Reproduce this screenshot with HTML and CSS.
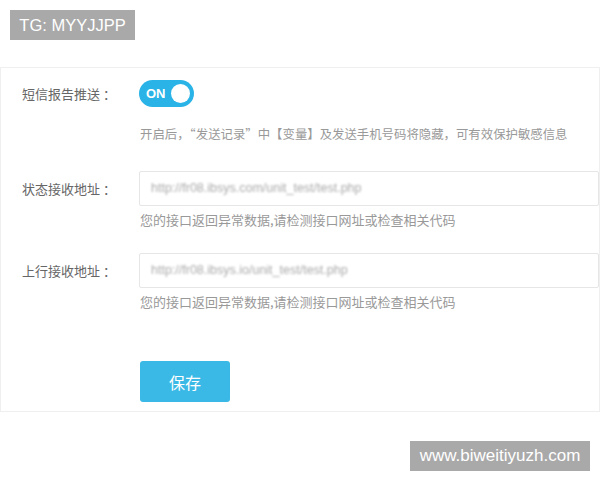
FILE: index.html
```html
<!DOCTYPE html>
<html lang="zh-CN">
<head>
<meta charset="utf-8">
<title>短信设置</title>
<link rel="stylesheet" href="styles.css">
</head>
<body>
<div class="badge">TG: MYYJJPP</div>
<section class="panel">
  <div class="row">
    <div class="label label-toggle">短信报告推送<span class="colon">：</span></div>
    <div class="field">
      <div class="toggle"><span class="toggle-text">ON</span><span class="knob"></span></div>
      <p class="desc">开启后，“发送记录”中【变量】及发送手机号码将隐藏，可有效保护敏感信息</p>
    </div>
  </div>
  <div class="row row-input">
    <div class="label label-input">状态接收地址<span class="colon">：</span></div>
    <div class="field">
      <div class="input"><span class="blur">http://fr08.ibsys.com/unit_test/test.php</span></div>
      <p class="help">您的接口返回异常数据,请检测接口网址或检查相关代码</p>
    </div>
  </div>
  <div class="row row-input2">
    <div class="label label-input">上行接收地址<span class="colon">：</span></div>
    <div class="field">
      <div class="input"><span class="blur">http://fr08.ibsys.io/unit_test/test.php</span></div>
      <p class="help">您的接口返回异常数据,请检测接口网址或检查相关代码</p>
    </div>
  </div>
  <div class="row row-btn">
    <div class="label"></div>
    <div class="field">
      <button class="save">保存</button>
    </div>
  </div>
</section>
<div class="footer">
  <div class="watermark">www.biweitiyuzh.com</div>
</div>
</body>
</html>
```
FILE: styles.css
```css
* { box-sizing: border-box; }
html, body { margin: 0; padding: 0; background: #fff; }
body {
  width: 600px;
  height: 480px;
  overflow: hidden;
  font-family: "Noto Sans CJK SC", "Noto Sans", sans-serif;
  color: #555;
}
.badge {
  margin: 10px 0 0 10px;
  width: 125px;
  height: 30px;
  background: #a9a9a9;
  color: #fff;
  font-family: "Liberation Sans", Arial, sans-serif;
  font-size: 16.5px;
  line-height: 30px;
  text-align: center;
}
.panel {
  margin-top: 27px;
  width: 600px;
  height: 345px;
  border: 1px solid #efefef;
  padding: 12px 0 0 0;
}
.row {
  display: grid;
  grid-template-columns: 138px 1fr;
}
.label {
  padding-left: 21px;
  font-size: 13px;
  color: #666;
}
.colon { margin-left: 3px; }
.label-toggle { line-height: 27px; }
.label-input { line-height: 35px; }
.toggle {
  position: relative;
  width: 55px;
  height: 27px;
  border-radius: 14px;
  background: #29b3e6;
}
.toggle-text {
  position: absolute;
  left: 7px;
  top: 0;
  line-height: 27px;
  font-family: "Liberation Sans", Arial, sans-serif;
  font-weight: bold;
  font-size: 13px;
  color: #fff;
}
.knob {
  position: absolute;
  right: 4px;
  top: 4px;
  width: 19px;
  height: 19px;
  border-radius: 50%;
  background: #fff;
}
.desc {
  margin: 18px 0 0 1px;
  font-size: 12.4px;
  line-height: 18px;
  color: #999;
}
.row-input { margin-top: 28px; }
.row-input2 { margin-top: 24px; }
.input {
  width: 460px;
  height: 35px;
  border: 1px solid #e6e6e6;
  border-radius: 2px;
  padding-left: 11px;
  line-height: 33px;
  font-family: "Liberation Sans", Arial, sans-serif;
  font-size: 12.5px;
}
.blur {
  color: #aaa;
  filter: blur(1.1px);
  display: inline-block;
}
.help {
  margin: 5px 0 0 1px;
  font-size: 13px;
  line-height: 18px;
  color: #999;
}
.row-btn { margin-top: 50px; }
.save {
  width: 90px;
  height: 41px;
  margin-left: 1px;
  border: none;
  border-radius: 3px;
  background: #3bb9e6;
  color: #fff;
  font-family: "Noto Sans CJK SC", sans-serif;
  font-size: 16px;
  padding: 0;
}
.footer {
  display: flex;
  justify-content: flex-end;
  padding: 29px 10px 0 0;
}
.watermark {
  width: 180px;
  height: 30px;
  background: #a9a9a9;
  color: #fff;
  font-family: "Liberation Sans", Arial, sans-serif;
  font-size: 17px;
  line-height: 30px;
  text-align: center;
}
```
